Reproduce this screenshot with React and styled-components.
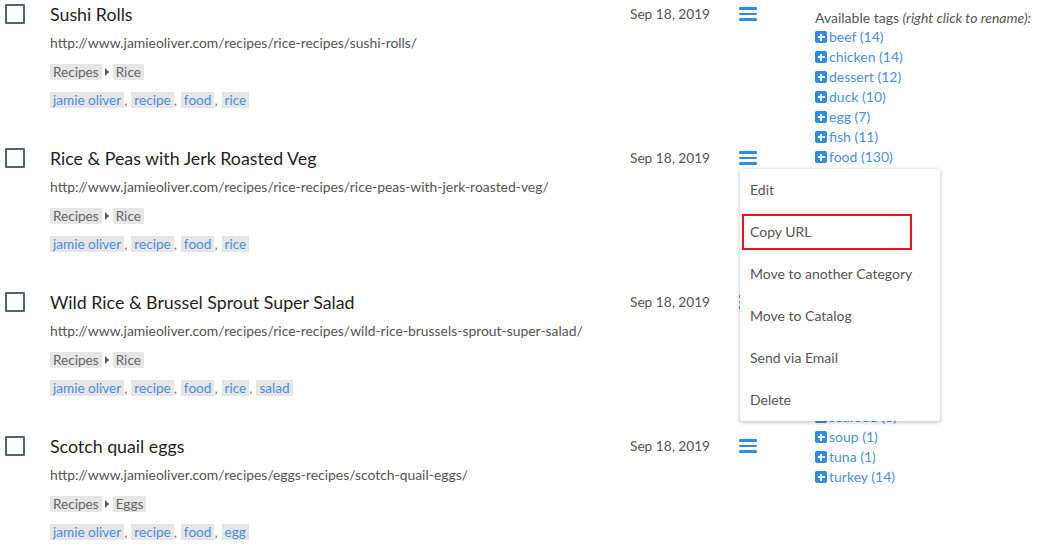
import React from "react";
import styled, { createGlobalStyle } from "styled-components";

const Global = createGlobalStyle`
  html, body { margin: 0; padding: 0; background: #fff; }
  body { font-family: Lato, "Open Sans", sans-serif; color: #333; }
  * { box-sizing: border-box; }
`;

const Page = styled.div`
  display: flex;
  align-items: flex-start;
  width: 1044px;
  height: 548px;
  overflow: hidden;
`;

const List = styled.div`
  width: 815px;
  flex: none;
`;

const Row = styled.div`
  display: grid;
  grid-template-columns: 50px 580px 110px 75px;
  height: 144px;
`;

const Check = styled.div`
  width: 20px;
  height: 20px;
  margin: 4px 0 0 5px;
  border: 2px solid #4f6773;
  border-radius: 1px;
`;

const Content = styled.div`
  display: flex;
  flex-direction: column;
  padding-top: 3px;
`;

const Title = styled.div`
  font-size: 17.8px;
  line-height: 22px;
  color: #1f1f1f;
`;

const Url = styled.div`
  font-size: 13.9px;
  line-height: 18px;
  margin-top: 9px;
  color: #555;
`;

const Line = styled.div`
  display: flex;
  align-items: center;
  font-size: 13.6px;
  line-height: 16px;
  margin-top: ${(p) => p.$mt}px;
`;

const Chip = styled.span`
  background: #e6e6e6;
  padding: 0 3px;
  color: ${(p) => (p.$link ? "#4a8fe4" : "#666")};
`;

const Arrow = styled.span`
  width: 0;
  height: 0;
  border-top: 4px solid transparent;
  border-bottom: 4px solid transparent;
  border-left: 4px solid #555;
  margin: 0 4px 0 3px;
`;

const Comma = styled.span`
  color: #777;
  margin-right: 4px;
`;

const DateCell = styled.div`
  font-size: 13.7px;
  line-height: 18px;
  padding-top: 5px;
  color: #555;
`;

const MenuCell = styled.div`
  position: relative;
  padding-top: 7px;
`;

const Burger = styled.div`
  width: 18px;
  display: flex;
  flex-direction: column;
  gap: 3px;
  margin-left: -1px;
  span {
    height: 2.6px;
    background: #2f8aea;
    border-radius: 1px;
  }
`;

const Dropdown = styled.div`
  position: absolute;
  top: 25px;
  left: 0;
  width: 200px;
  background: #fff;
  border-radius: 2px;
  box-shadow: 0 1px 4px rgba(0, 0, 0, 0.28);
  z-index: 5;
`;

const Item = styled.div`
  position: relative;
  height: 42px;
  line-height: 42px;
  padding-left: 10px;
  font-size: 14px;
  color: #555;
  white-space: nowrap;
`;

const Highlight = styled.div`
  position: absolute;
  left: 2px;
  top: 3px;
  width: 170px;
  height: 36px;
  border: 2px solid #e8131f;
`;

const Tags = styled.div`
  padding-top: 8px;
  font-size: 14px;
  line-height: 20px;
  white-space: nowrap;
`;

const TagsHead = styled.div`
  color: #555;
  line-height: 19px;
  i { font-style: italic; }
`;

const TagItem = styled.div`
  display: flex;
  align-items: center;
  color: #4a8fe4;
`;

const Plus = styled.span`
  width: 12px;
  height: 12px;
  margin-right: 2px;
  border-radius: 2px;
  background: #2f8aea;
  position: relative;
  flex: none;
  &::before, &::after {
    content: "";
    position: absolute;
    background: #fff;
  }
  &::before { left: 2.5px; right: 2.5px; top: 5px; height: 2px; }
  &::after { top: 2.5px; bottom: 2.5px; left: 5px; width: 2px; }
`;

const recipes = [
  {
    title: "Sushi Rolls",
    url: "http://www.jamieoliver.com/recipes/rice-recipes/sushi-rolls/",
    cat: "Rice",
    tags: ["jamie oliver", "recipe", "food", "rice"],
  },
  {
    title: "Rice & Peas with Jerk Roasted Veg",
    url: "http://www.jamieoliver.com/recipes/rice-recipes/rice-peas-with-jerk-roasted-veg/",
    cat: "Rice",
    tags: ["jamie oliver", "recipe", "food", "rice"],
    menu: true,
  },
  {
    title: "Wild Rice & Brussel Sprout Super Salad",
    url: "http://www.jamieoliver.com/recipes/rice-recipes/wild-rice-brussels-sprout-super-salad/",
    cat: "Rice",
    tags: ["jamie oliver", "recipe", "food", "rice", "salad"],
  },
  {
    title: "Scotch quail eggs",
    url: "http://www.jamieoliver.com/recipes/eggs-recipes/scotch-quail-eggs/",
    cat: "Eggs",
    tags: ["jamie oliver", "recipe", "food", "egg"],
  },
];

const available = [
  ["beef", 14], ["chicken", 14], ["dessert", 12], ["duck", 10], ["egg", 7],
  ["fish", 11], ["food", 130], ["fruit", 9], ["ham", 4], ["healthy", 22],
  ["jamie oliver", 130], ["lamb", 12], ["pasta", 15], ["pork", 11],
  ["recipe", 130], ["rice", 20], ["salad", 18], ["salmon", 6], ["sausage", 5],
  ["seafood", 8], ["soup", 1], ["tuna", 1], ["turkey", 14],
];

const menuItems = ["Edit", "Copy URL", "Move to another Category", "Move to Catalog", "Send via Email", "Delete"];

export default function App() {
  return (
    <>
      <Global />
      <Page>
        <List>
          {recipes.map((r) => (
            <Row key={r.title}>
              <div><Check /></div>
              <Content>
                <Title>{r.title}</Title>
                <Url>{r.url}</Url>
                <Line $mt={12}>
                  <Chip>Recipes</Chip>
                  <Arrow />
                  <Chip>{r.cat}</Chip>
                </Line>
                <Line $mt={12}>
                  {r.tags.map((t, i) => (
                    <React.Fragment key={t}>
                      <Chip $link>{t}</Chip>
                      {i < r.tags.length - 1 && <Comma>,</Comma>}
                    </React.Fragment>
                  ))}
                </Line>
              </Content>
              <DateCell>Sep 18, 2019</DateCell>
              <MenuCell>
                <Burger><span /><span /><span /></Burger>
                {r.menu && (
                  <Dropdown>
                    {menuItems.map((m) => (
                      <Item key={m}>
                        {m}
                        {m === "Copy URL" && <Highlight />}
                      </Item>
                    ))}
                  </Dropdown>
                )}
              </MenuCell>
            </Row>
          ))}
        </List>
        <Tags>
          <TagsHead>Available tags <i>(right click to rename):</i></TagsHead>
          {available.map(([n, c]) => (
            <TagItem key={n}>
              <Plus />
              {n} ({c})
            </TagItem>
          ))}
        </Tags>
      </Page>
    </>
  );
}
